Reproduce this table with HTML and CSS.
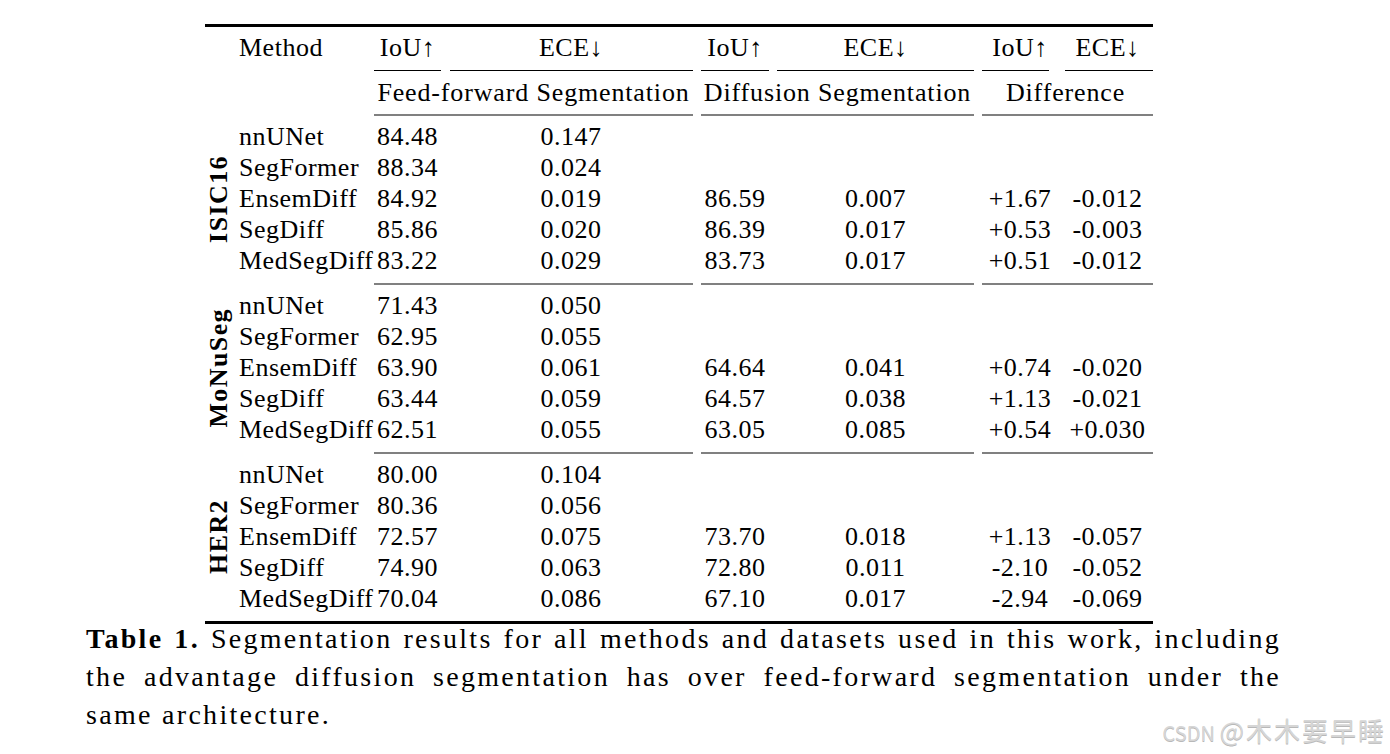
FILE: index.html
```html
<!DOCTYPE html>
<html>
<head>
<meta charset="utf-8">
<link rel="stylesheet" href="styles.css">
</head>
<body>
<div class="page">
  <div class="tbl">
    <div class="rule-top full"></div>

    <div></div><div class="m">Method</div><div class="c">IoU↑</div><div class="c">ECE↓</div><div class="c">IoU↑</div><div class="c">ECE↓</div><div class="c">IoU↑</div><div class="c">ECE↓</div>

    <div class="cm"></div><div class="cm"></div><div class="cm line l2"></div><div class="cm line l3"></div><div class="cm line l4"></div><div class="cm line l5"></div><div class="cm line l6"></div><div class="cm line l7"></div>

    <div></div><div></div><div class="c span2 grp">Feed-forward Segmentation</div><div class="c span2 grp">Diffusion Segmentation</div><div class="c span2 grp">Difference</div>

    <div class="mr"></div><div class="mr"></div><div class="mr line span2 ga"></div><div class="mr line span2 gb"></div><div class="mr line span2 gc"></div>

    <div class="lbl"><span>ISIC16</span></div>
    <div class="m">nnUNet</div><div class="c">84.48</div><div class="c">0.147</div><div></div><div></div><div></div><div></div>
    <div class="m">SegFormer</div><div class="c">88.34</div><div class="c">0.024</div><div></div><div></div><div></div><div></div>
    <div class="m">EnsemDiff</div><div class="c">84.92</div><div class="c">0.019</div><div class="c">86.59</div><div class="c">0.007</div><div class="c">+1.67</div><div class="c">-0.012</div>
    <div class="m">SegDiff</div><div class="c">85.86</div><div class="c">0.020</div><div class="c">86.39</div><div class="c">0.017</div><div class="c">+0.53</div><div class="c">-0.003</div>
    <div class="m">MedSegDiff</div><div class="c">83.22</div><div class="c">0.029</div><div class="c">83.73</div><div class="c">0.017</div><div class="c">+0.51</div><div class="c">-0.012</div>

    <div class="br"></div><div class="br"></div><div class="br line span2 ga"></div><div class="br line span2 gb"></div><div class="br line span2 gc"></div>

    <div class="lbl"><span>MoNuSeg</span></div>
    <div class="m">nnUNet</div><div class="c">71.43</div><div class="c">0.050</div><div></div><div></div><div></div><div></div>
    <div class="m">SegFormer</div><div class="c">62.95</div><div class="c">0.055</div><div></div><div></div><div></div><div></div>
    <div class="m">EnsemDiff</div><div class="c">63.90</div><div class="c">0.061</div><div class="c">64.64</div><div class="c">0.041</div><div class="c">+0.74</div><div class="c">-0.020</div>
    <div class="m">SegDiff</div><div class="c">63.44</div><div class="c">0.059</div><div class="c">64.57</div><div class="c">0.038</div><div class="c">+1.13</div><div class="c">-0.021</div>
    <div class="m">MedSegDiff</div><div class="c">62.51</div><div class="c">0.055</div><div class="c">63.05</div><div class="c">0.085</div><div class="c">+0.54</div><div class="c">+0.030</div>

    <div class="br"></div><div class="br"></div><div class="br line span2 ga"></div><div class="br line span2 gb"></div><div class="br line span2 gc"></div>

    <div class="lbl"><span>HER2</span></div>
    <div class="m">nnUNet</div><div class="c">80.00</div><div class="c">0.104</div><div></div><div></div><div></div><div></div>
    <div class="m">SegFormer</div><div class="c">80.36</div><div class="c">0.056</div><div></div><div></div><div></div><div></div>
    <div class="m">EnsemDiff</div><div class="c">72.57</div><div class="c">0.075</div><div class="c">73.70</div><div class="c">0.018</div><div class="c">+1.13</div><div class="c">-0.057</div>
    <div class="m">SegDiff</div><div class="c">74.90</div><div class="c">0.063</div><div class="c">72.80</div><div class="c">0.011</div><div class="c">-2.10</div><div class="c">-0.052</div>
    <div class="m">MedSegDiff</div><div class="c">70.04</div><div class="c">0.086</div><div class="c">67.10</div><div class="c">0.017</div><div class="c">-2.94</div><div class="c">-0.069</div>

    <div class="rule-bottom full"></div>
  </div>

  <div class="caption">
    <span class="cl just"><b>Table 1.</b> Segmentation results for all methods and datasets used in this work, including</span>
    <span class="cl just">the advantage diffusion segmentation has over feed-forward segmentation under the</span>
    <span class="cl">same architecture.</span>
  </div>

  <div class="wm">CSDN <span class="big">@木木要早睡</span></div>
</div>
</body>
</html>
```

FILE: styles.css
```css
html, body {
  margin: 0;
  padding: 0;
  background: #fff;
}

.page {
  position: relative;
  width: 1390px;
  height: 754px;
  overflow: hidden;
  font-family: "Liberation Serif", "Times New Roman", serif;
  color: #000;
}

.tbl {
  margin-left: 205px;
  width: 948px;
  display: grid;
  grid-template-columns: 28px 137px 75px 252px 76px 205px 84px 91px;
  font-size: 26px;
  letter-spacing: 0.5px;
  line-height: 31px;
}

.full { grid-column: 1 / -1; }
.span2 { grid-column: span 2; }

.m {
  padding-left: 6px;
  white-space: nowrap;
}

.c {
  text-align: center;
  white-space: nowrap;
}

.grp {
  letter-spacing: 0.85px;
}

.rule-top {
  height: 3px;
  background: #000;
  margin: 24px 0 5px;
}

.rule-bottom {
  height: 3px;
  background: #000;
  margin: 7px 0 0;
}

.cm {
  height: 1px;
  margin: 7px 0 6px;
}
.cm.line { background: #000; }
.l2 { margin-left: 4px; margin-right: 4px; }
.l3 { margin-left: 5px; margin-right: 4px; }
.l4 { margin-left: 4px; margin-right: 4px; }
.l5 { margin-left: 4px; margin-right: 4px; }
.l6 { margin-left: 4px; margin-right: 13px; }
.l7 { margin-left: 3px; margin-right: 0; }

.mr {
  height: 2px;
  margin: 6px 0 5px;
}
.br {
  height: 2px;
  margin: 7px 0 5px;
}
.line.mr, .line.br { background: #808080; }
.ga { margin-left: 4px; margin-right: 4px; }
.gb { margin-left: 4px; margin-right: 4px; }
.gc { margin-left: 4px; margin-right: 0; }

.lbl {
  grid-row: span 5;
  display: flex;
  align-items: center;
  justify-content: center;
}
.lbl span {
  writing-mode: vertical-rl;
  transform: rotate(180deg);
  font-weight: bold;
  font-size: 26px;
  letter-spacing: 1.4px;
  line-height: normal;
  white-space: nowrap;
}

.caption {
  margin: -4px 0 0 86px;
  width: 1195px;
  font-size: 28px;
  line-height: 38px;
  letter-spacing: 2.3px;
}
.cl {
  display: block;
  white-space: nowrap;
}
.cl.just {
  white-space: normal;
  text-align: justify;
  text-align-last: justify;
}

.wm {
  position: absolute;
  right: 4px;
  top: 715px;
  font-family: "Noto Sans CJK SC", "Noto Sans", sans-serif;
  font-size: 20px;
  line-height: 30px;
  color: #d6d6d6;
  text-shadow: 0 1px 0 #b8b8b8;
  white-space: nowrap;
}
.wm .big {
  font-size: 26px;
  letter-spacing: 2px;
}
```
